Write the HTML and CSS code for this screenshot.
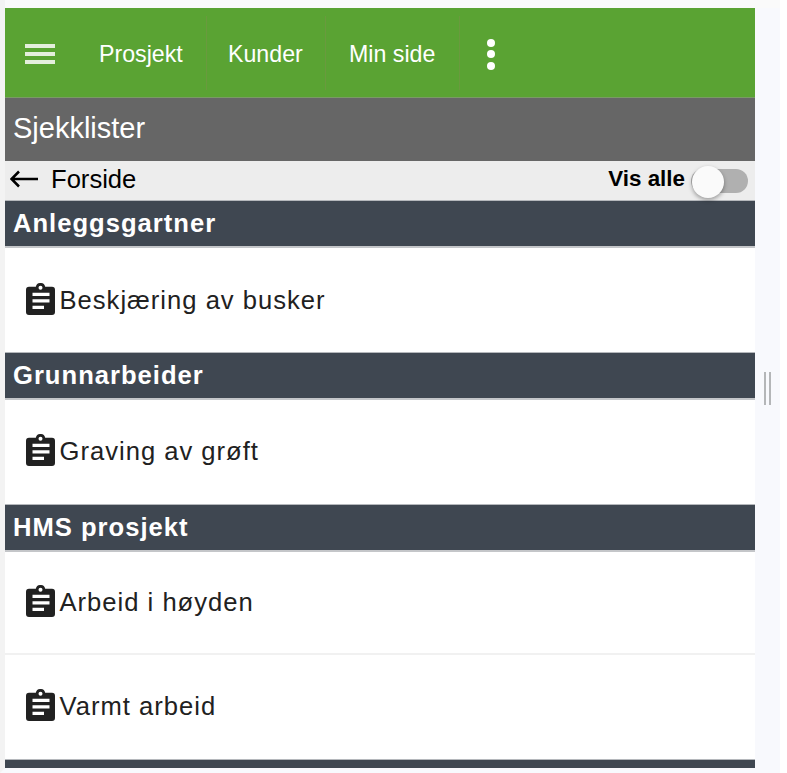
FILE: index.html
```html
<!DOCTYPE html>
<html lang="en">
  <head>
    <meta charset="utf-8" />
    <meta name="viewport" content="width=device-width, initial-scale=1" />
    <title>Sjekklister</title>
    <link rel="stylesheet" href="styles.css">
  </head>
  <body>
    <div class="shell">
      <main class="app">
        <nav class="navbar">
          <button class="nav-toggle" aria-label="Meny">
            <span class="bar"></span><span class="bar"></span><span class="bar"></span>
          </button>
          <a class="nav-link link-prosjekt">Prosjekt</a>
          <a class="nav-link link-kunder">Kunder</a>
          <a class="nav-link link-minside">Min side</a>
          <button class="nav-more" aria-label="Mer">
            <span class="dot"></span><span class="dot"></span><span class="dot"></span>
          </button>
        </nav>
        <h1 class="page-title">Sjekklister</h1>
        <div class="toolbar">
          <a class="back">
            <svg class="back-arrow" width="30" height="18" viewBox="0 0 30 18"><path d="M28 9H1.500M9 1.500L1.500 9l7.500 7.500" fill="none" stroke="#000" stroke-width="2.500"/></svg>
            Forside
          </a>
          <label class="show-all">
            <span class="show-all-text">Vis alle</span>
            <span class="switch"><span class="knob"></span></span>
          </label>
        </div>

        <h2 class="group">Anleggsgartner</h2>
        <a class="item">
          <svg class="clip" viewBox="0 0 29 32"><use href="#clipboard"/></svg>
          Beskjæring av busker
        </a>

        <h2 class="group">Grunnarbeider</h2>
        <a class="item">
          <svg class="clip" viewBox="0 0 29 32"><use href="#clipboard"/></svg>
          Graving av grøft
        </a>

        <h2 class="group">HMS prosjekt</h2>
        <a class="item item-line">
          <svg class="clip" viewBox="0 0 29 32"><use href="#clipboard"/></svg>
          Arbeid i høyden
        </a>
        <a class="item">
          <svg class="clip" viewBox="0 0 29 32"><use href="#clipboard"/></svg>
          Varmt arbeid
        </a>

        <h2 class="group"></h2>
      </main>
      <aside class="splitter"><span class="grip"></span></aside>
    </div>

    <svg width="0" height="0" class="defs">
      <symbol id="clipboard" viewBox="0 0 29 32">
        <path fill-rule="evenodd" fill="#212121" d="M3 3.800h6.800a4.800 4.800 0 0 1 9.400 0H26a3 3 0 0 1 3 3V29a3 3 0 0 1-3 3H3a3 3 0 0 1-3-3V6.800a3 3 0 0 1 3-3zM14.500 2.800a2 2 0 1 0 0 4 2 2 0 0 0 0-4zM6.500 9.800v3.300h17V9.800zM6.500 16.300v3.300h17v-3.300zM6.500 22.800v3.200h11.500v-3.200z"/>
      </symbol>
    </svg>
  </body>
</html>
```

FILE: styles.css
```css
html, body {
  height: 100%;
}

body {
  margin: 0;
  background-color: #fff;
  font-family: "Liberation Sans", Arial, sans-serif;
  overflow: hidden;
}

.defs {
  position: absolute;
}

.shell {
  display: flex;
  width: 780px;
  height: 773px;
  padding-top: 8px;
  box-sizing: border-box;
  background-color: #fafafa;
  border-left: 5px solid #f3f3f3;
  border-bottom: 5px solid #f8f9fd;
}

.app {
  width: 750px;
  height: 760px;
  overflow: hidden;
  background-color: #fff;
}

.navbar {
  display: flex;
  align-items: center;
  height: 90px;
  background-color: #5aa333;
  border-bottom: 1px solid #7a9a66;
  box-sizing: border-box;
}

.nav-toggle, .nav-more {
  display: flex;
  flex-direction: column;
  align-items: center;
  margin-top: 3px;
  padding: 0;
  border: 0;
  background: none;
}

.nav-toggle {
  width: 70px;
  gap: 4px;
}

.bar {
  width: 30px;
  height: 4px;
  background-color: #e4efdd;
}

.nav-link {
  display: flex;
  align-items: center;
  height: 74px;
  padding-top: 3px;
  font-size: 23.200px;
  color: #fff;
  border-right: 1px solid #6a9a3e;
  box-sizing: border-box;
}

.link-prosjekt {
  width: 132px;
  padding-left: 24px;
}

.link-kunder {
  width: 119px;
  padding-left: 21px;
}

.link-minside {
  width: 134px;
  padding-left: 23px;
}

.nav-more {
  gap: 3.500px;
  width: 62px;
}

.dot {
  width: 8px;
  height: 8px;
  border-radius: 50%;
  background-color: #fff;
}

.page-title {
  margin: 0;
  height: 63px;
  padding-left: 8px;
  font-size: 29px;
  font-weight: 400;
  line-height: 61px;
  color: #fff;
  background-color: #666;
}

.toolbar {
  display: flex;
  justify-content: space-between;
  align-items: center;
  height: 39.400px;
  background-color: #ededed;
  padding: 0 7px 0 5px;
  box-sizing: border-box;
}

.back {
  display: flex;
  align-items: center;
  gap: 11px;
  padding-bottom: 3px;
  font-size: 25.600px;
  color: #000;
}

.show-all {
  display: flex;
  align-items: center;
  font-size: 22.400px;
  font-weight: 700;
  color: #000;
}

.show-all-text {
  margin-bottom: 4px;
}

.switch {
  position: relative;
  display: block;
  width: 57px;
  height: 24px;
  margin-left: 6px;
  border-radius: 12px;
  background-color: #b0b0b0;
}

.knob {
  position: absolute;
  left: 1px;
  top: -3px;
  width: 32px;
  height: 32px;
  border-radius: 50%;
  background-color: #fafafa;
  box-shadow: 0 2px 4px rgba(0, 0, 0, 0.35);
}

.group {
  margin: 0;
  height: 48px;
  padding-left: 8px;
  font-size: 25.600px;
  font-weight: 700;
  letter-spacing: 1px;
  line-height: 44px;
  color: #fff;
  background-color: #3f4751;
  border-top: 1px solid #b5b8bc;
  border-bottom: 2px solid #c4c6c9;
  box-sizing: border-box;
}

.item {
  display: flex;
  align-items: center;
  gap: 5px;
  height: 103.700px;
  padding-left: 20.500px;
  font-size: 25.600px;
  letter-spacing: 1px;
  color: #212121;
  box-sizing: border-box;
}

.item-line {
  height: 103.300px;
  border-bottom: 2px solid #f1f1f1;
}

.clip {
  width: 29px;
  height: 32px;
  margin-bottom: 3px;
}

.splitter {
  position: relative;
  width: 25px;
  height: 760px;
  background-color: #f8f9fd;
}

.grip {
  position: absolute;
  left: 9px;
  top: 364px;
  width: 2px;
  height: 33px;
  background-color: #b4b6b8;
  box-shadow: 5px 0 0 #b4b6b8;
}
```
